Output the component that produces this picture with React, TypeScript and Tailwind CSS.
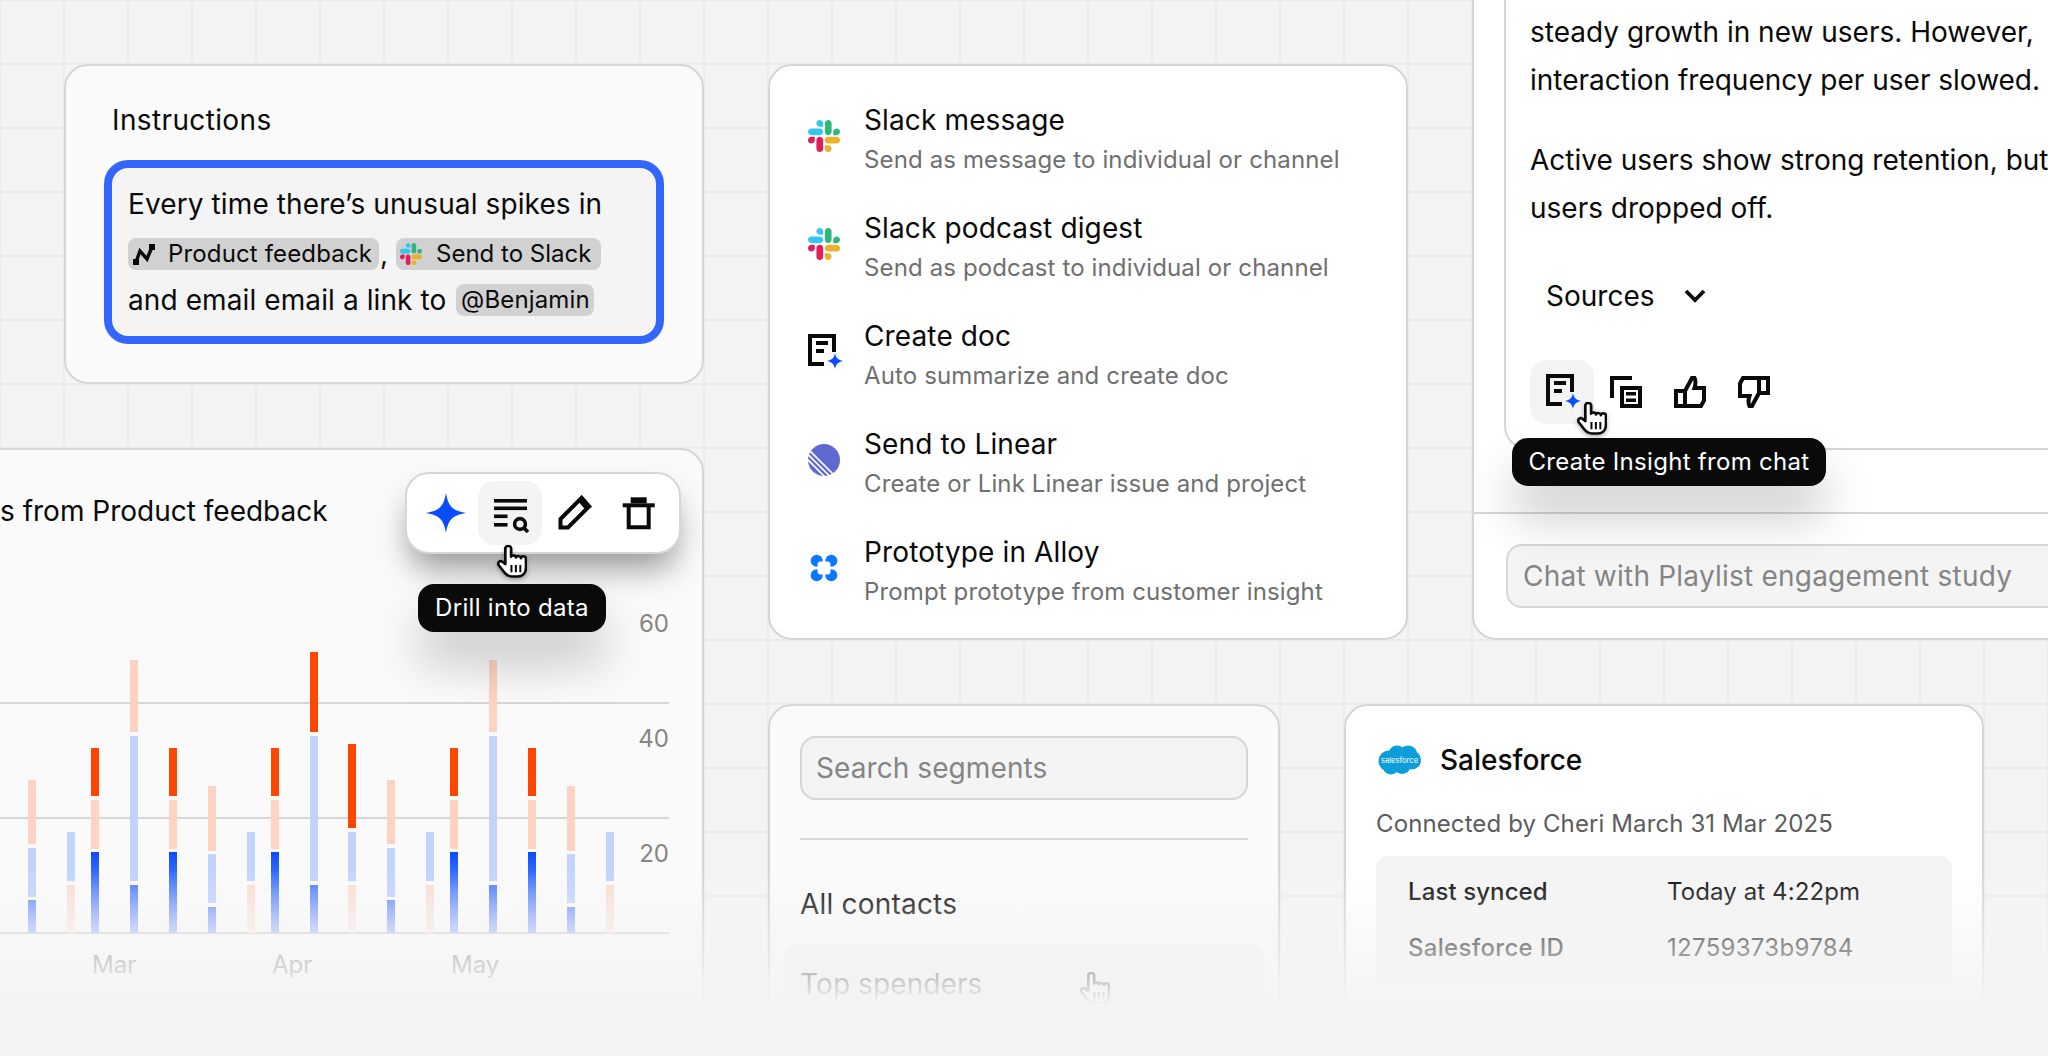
import React from "react";

const BLUE = "#0a4dff";

function Star({ size, className = "" }: { size: number; className?: string }) {
  return (
    <svg width={size} height={size} viewBox="-1 -1 2 2" className={className}>
      <path d="M0-1C.12-.32.32-.12 1 0 .32.12.12.32 0 1-.12.32-.32.12-1 0-.32-.12-.12-.32 0-1Z" fill={BLUE} />
    </svg>
  );
}

function Slack({ size }: { size: number }) {
  return (
    <svg width={size} height={size} viewBox="0 0 122.8 122.8" className="shrink-0">
      <path d="M25.8 77.6c0 7.1-5.8 12.9-12.9 12.9S0 84.7 0 77.6s5.8-12.9 12.9-12.9h12.9v12.9z" fill="#e01e5a" />
      <path d="M32.3 77.6c0-7.1 5.8-12.9 12.9-12.9s12.9 5.8 12.9 12.9v32.3c0 7.1-5.8 12.9-12.9 12.9s-12.9-5.8-12.9-12.9V77.6z" fill="#e01e5a" />
      <path d="M45.2 25.8c-7.1 0-12.9-5.8-12.9-12.9S38.1 0 45.2 0s12.9 5.8 12.9 12.9v12.9H45.2z" fill="#36c5f0" />
      <path d="M45.2 32.3c7.1 0 12.9 5.8 12.9 12.9s-5.8 12.9-12.9 12.9H12.9C5.8 58.1 0 52.3 0 45.2s5.8-12.9 12.9-12.9h32.3z" fill="#36c5f0" />
      <path d="M97 45.2c0-7.1 5.8-12.9 12.9-12.9s12.9 5.8 12.9 12.9-5.8 12.9-12.9 12.9H97V45.2z" fill="#2eb67d" />
      <path d="M90.5 45.2c0 7.1-5.8 12.9-12.9 12.9s-12.9-5.8-12.9-12.9V12.9C64.7 5.8 70.5 0 77.6 0s12.9 5.8 12.9 12.9v32.3z" fill="#2eb67d" />
      <path d="M77.6 97c7.1 0 12.9 5.8 12.9 12.9s-5.8 12.9-12.9 12.9-12.9-5.8-12.9-12.9V97h12.9z" fill="#ecb22e" />
      <path d="M77.6 90.5c-7.1 0-12.9-5.8-12.9-12.9s5.8-12.9 12.9-12.9h32.3c7.1 0 12.9 5.8 12.9 12.9s-5.8 12.9-12.9 12.9H77.6z" fill="#ecb22e" />
    </svg>
  );
}

function DocSpark() {
  return (
    <svg width="36" height="36" viewBox="0 0 36 36" className="shrink-0 overflow-visible">
      <path d="M0 0H28V18H24V4H4V28H16V32H0Z" fill="#0a0a0a" />
      <rect x="8" y="7" width="12" height="4" fill="#0a0a0a" />
      <rect x="8" y="15" width="8" height="4" fill="#0a0a0a" />
      <path d="M27 19C28 24 30 26 35 27 30 28 28 30 27 35 26 30 24 28 19 27 24 26 26 24 27 19Z" fill={BLUE} />
    </svg>
  );
}

function Linear() {
  return (
    <svg width="32" height="32" viewBox="0 0 32 32" className="shrink-0">
      <circle cx="16" cy="16" r="16" fill="#5e6ad2" />
      <g stroke="#fff" strokeWidth="1.6">
        <path d="M-2 3L30 35" />
        <path d="M-2 8.5L26 36.5" />
        <path d="M-2 14L22 38" />
      </g>
    </svg>
  );
}

function Alloy() {
  return (
    <svg width="32" height="32" viewBox="0 0 32 32" className="shrink-0">
      <g fill="#0a77ff">
        <circle cx="8.7" cy="8.7" r="6" />
        <circle cx="23.3" cy="8.7" r="6" />
        <circle cx="8.7" cy="23.3" r="6" />
        <circle cx="23.3" cy="23.3" r="6" />
      </g>
      <rect x="9.5" y="9.5" width="13" height="13" rx="3" fill="#fff" />
    </svg>
  );
}

function Hand({ className = "" }: { className?: string }) {
  return (
    <svg width="30" height="33" viewBox="0.5 0.5 27 32" preserveAspectRatio="none" className={className}>
      <path
        d="M8 4a2.6 2.6 0 0 1 5.2 0V12a2.3 2.3 0 0 1 4.4.6a2.3 2.3 0 0 1 4.4.8a2.3 2.3 0 0 1 4.6 1V22c0 5.5-3 9-7.5 9H14c-3 0-5-1.2-7-4L2 20c-1.6-2.4 1.2-5 3.4-3.2L8 19Z"
        fill="#fff"
        stroke="#0a0a0a"
        strokeWidth="2.4"
        strokeLinejoin="round"
      />
      <path d="M13.5 20v7M17.5 20v7M21.5 20v7" stroke="#0a0a0a" strokeWidth="1.8" />
    </svg>
  );
}

function Tooltip({ text, className }: { text: string; className: string }) {
  return (
    <div
      className={`absolute z-20 flex h-12 items-center whitespace-nowrap rounded-2xl bg-[#0a0a0a] text-2xl tracking-[0.3px] text-white shadow-[0_32px_48px_rgba(0,0,0,0.2)] ${className}`}
    >
      {text}
    </div>
  );
}

function ThumbUp({ flip = false }: { flip?: boolean }) {
  return (
    <svg width="32" height="32" viewBox="0 0 32 32" fill="none" className={flip ? "rotate-180" : ""}>
      <path
        d="M2 15H11V30H2ZM11 15L18 2H20.5C22 5 21.5 9 20.5 12H30V24.5L27 30H11"
        stroke="#0a0a0a"
        strokeWidth="4"
      />
    </svg>
  );
}

const COLS = [28, 67, 91, 130, 169, 208, 247, 271, 310, 348, 387, 426, 450, 489, 528, 567, 606];
const KIND = "a b c d c a2 b c e f a b c d c a2 b".split(" ");
type Seg = [number, number, string];
const LB = "#c2d3fe";
const PE = "#ffd2c1";
const OR = "#ff4600";
const SHAPES: Record<string, Seg[]> = {
  a: [[780, 844, PE], [848, 897, LB], [900, 933, "url(#cb)"]],
  a2: [[786, 851, PE], [854, 903, LB], [907, 933, "url(#cb)"]],
  b: [[832, 881, LB], [885, 933, "url(#cp)"]],
  c: [[748, 796, OR], [800, 849, PE], [852, 933, "url(#cb)"]],
  d: [[660, 732, PE], [736, 881, LB], [885, 933, "url(#cb)"]],
  e: [[652, 732, OR], [736, 881, LB], [885, 933, "url(#cb)"]],
  f: [[744, 828, OR], [832, 881, LB], [885, 933, "url(#cp)"]],
};

function Chart() {
  return (
    <svg width="680" height="480" viewBox="0 531 680 480" className="block font-['Inter',sans-serif]">
      <defs>
        <linearGradient id="cb" gradientUnits="userSpaceOnUse" x1="0" y1="852" x2="0" y2="933">
          <stop offset="0" stopColor="#0a4dff" />
          <stop offset="1" stopColor="#b0c2fb" />
        </linearGradient>
        <linearGradient id="cp" gradientUnits="userSpaceOnUse" x1="0" y1="885" x2="0" y2="933">
          <stop offset="0" stopColor="#fddccf" />
          <stop offset="1" stopColor="#f8ece8" />
        </linearGradient>
      </defs>
      {[702, 817, 932].map((y) => (
        <rect key={y} x="0" y={y} width="669" height="2" fill="#d6d6d6" />
      ))}
      {COLS.map((x, i) =>
        SHAPES[KIND[i]].map(([a, b, c]) => <rect key={`${i}-${a}`} x={x} y={a} width="8" height={b - a} fill={c} />)
      )}
      <g fill="#858585" fontSize="24" textAnchor="end">
        <text x="669" y="632">60</text>
        <text x="669" y="747">40</text>
        <text x="669" y="862">20</text>
      </g>
      <g fill="#858585" fontSize="24">
        <text x="92" y="973">Mar</text>
        <text x="272" y="973">Apr</text>
        <text x="451" y="973">May</text>
      </g>
    </svg>
  );
}

function Item({ icon, title, sub }: { icon: React.ReactNode; title: string; sub: string }) {
  return (
    <div className="flex items-center gap-6">
      <div className="-mt-1 w-8 shrink-0">{icon}</div>
      <div>
        <div className="h-[43px] text-[28px] leading-10 tracking-[0.13px] text-[#0a0a0a]">{title}</div>
        <div className="text-2xl leading-[33px] tracking-[0.13px] text-[#6f6f6f]">{sub}</div>
      </div>
    </div>
  );
}

export default function App() {
  return (
    <div className="relative flex h-[1056px] w-[2048px] overflow-hidden bg-[#f4f4f4] bg-[linear-gradient(to_right,#ececec_2px,transparent_2px),linear-gradient(to_bottom,#ececec_2px,transparent_2px)] bg-size-[64px_64px] bg-position-[-1px_-1px] font-['Inter',sans-serif] text-[#0a0a0a]">
      {/* left column */}
      <div className="flex w-[704px] shrink-0 flex-col gap-16 pl-16 pt-16">
        <div className="h-[320px] w-[640px] shrink-0 rounded-3xl border-2 border-[#d6d6d6] bg-[#fafafa] px-[38px] pt-[34px]">
          <div className="pl-[8px] text-[28px] leading-10 tracking-[0.37px]">Instructions</div>
          <div className="mt-5 h-[184px] w-[560px] rounded-3xl border-8 border-[#3366ff] bg-[#f4f4f4] pl-4 pt-3 text-[28px]">
            <div className="h-12 leading-[48px] tracking-[0.11px]">Every time there’s unusual spikes in</div>
            <div className="flex h-[52px] items-center whitespace-nowrap">
              <span className="flex h-8 w-[251px] items-center gap-[12px] rounded-lg bg-[#d1d1d1] pl-1 text-2xl tracking-[0.15px]">
                <svg width="24" height="24" viewBox="0 0 24 24" fill="none">
                  <path d="M4 20L8 9L15 17L20 5" stroke="#0a0a0a" strokeWidth="3.4" />
                  <rect x="1" y="17" width="6" height="6" fill="#0a0a0a" />
                  <rect x="17" y="2" width="6" height="6" fill="#0a0a0a" />
                </svg>
                Product feedback
              </span>
              <span className="w-[17px] pl-[1px]">,</span>
              <span className="flex h-8 w-[205px] items-center gap-[14px] rounded-lg bg-[#d1d1d1] pl-1 text-2xl">
                <Slack size={22} />
                Send to Slack
              </span>
            </div>
            <div className="-mt-1 flex h-12 items-center whitespace-nowrap">
              <span className="tracking-[0.1px]">and email email a link to</span>
              <span className="ml-[10px] flex h-8 w-[138px] items-center justify-center rounded-lg bg-[#d1d1d1] text-2xl tracking-[0.15px]">@Benjamin</span>
            </div>
          </div>
        </div>

        <div className="relative -ml-[88px] h-[640px] w-[728px] shrink-0 rounded-3xl border-2 border-[#d6d6d6] bg-[#fafafa] pl-[22px] pt-[41px]">
          <div className="h-10 whitespace-nowrap text-[28px] leading-10">s from Product feedback</div>
          <Chart />
          <div className="absolute left-[427px] top-[22px] z-10 flex h-[82px] w-[276px] items-center rounded-3xl border-2 border-[#d6d6d6] bg-white pl-[7px] shadow-[0_20px_32px_-6px_rgba(0,0,0,0.4)]">
            <div className="flex h-16 w-16 items-center justify-center">
              <Star size={40} />
            </div>
            <div className="flex h-16 w-16 items-center justify-center rounded-2xl bg-[#f4f4f4]">
              <svg width="40" height="40" viewBox="0 0 40 40" fill="#0a0a0a">
                <rect x="4" y="6" width="33" height="3.6" />
                <rect x="4" y="13.5" width="33" height="3.6" />
                <rect x="4" y="21.5" width="13.5" height="3.6" />
                <rect x="4" y="30" width="13.5" height="3.6" />
                <circle cx="30" cy="31" r="5.4" fill="none" stroke="#0a0a0a" strokeWidth="3.6" />
                <path d="M33.5 34.5L38 39" stroke="#0a0a0a" strokeWidth="3.6" />
              </svg>
            </div>
            <div className="flex h-16 w-16 items-center justify-center">
              <svg width="40" height="40" viewBox="0 0 40 40" fill="none">
                <path d="M6.5 26L27.5 5L35 13.5L14 34.5H6.5Z" stroke="#0a0a0a" strokeWidth="4" />
                <path d="M24 8L27.7 2L38 13.7L31.5 17Z" fill="#0a0a0a" />
              </svg>
            </div>
            <div className="flex h-16 w-16 items-center justify-center">
              <svg width="40" height="40" viewBox="0 0 40 40" fill="#0a0a0a">
                <rect x="12.7" y="4.3" width="16" height="6" />
                <rect x="4.7" y="10.3" width="32" height="4" />
                <path d="M8.7 14H12.7V32.3H28.7V14H32.7V36.3H8.7Z" />
              </svg>
            </div>
          </div>
          <Tooltip text="Drill into data" className="left-[440px] top-[134px] w-[188px] justify-center" />
          <Hand className="absolute left-[519px] top-[95px] z-30 drop-shadow-[0_2px_2px_rgba(0,0,0,0.3)]" />
        </div>
      </div>

      {/* right area */}
      <div className="ml-16 flex flex-col gap-16">
        <div className="flex h-[640px] shrink-0 gap-16 pt-16">
          <div className="flex h-[576px] w-[640px] shrink-0 flex-col gap-8 rounded-3xl border-2 border-[#d6d6d6] bg-white pl-[38px] pt-[34px]">
            <Item icon={<Slack size={32} />} title="Slack message" sub="Send as message to individual or channel" />
            <Item icon={<Slack size={32} />} title="Slack podcast digest" sub="Send as podcast to individual or channel" />
            <Item icon={<DocSpark />} title="Create doc" sub="Auto summarize and create doc" />
            <Item icon={<Linear />} title="Send to Linear" sub="Create or Link Linear issue and project" />
            <Item icon={<Alloy />} title="Prototype in Alloy" sub="Prompt prototype from customer insight" />
          </div>

          <div className="relative -mt-[164px] flex h-[740px] w-[700px] shrink-0 flex-col rounded-3xl border-2 border-[#d6d6d6] bg-white">
            <div className="ml-[30px] flex flex-1 flex-col justify-end rounded-bl-3xl border-b-2 border-l-2 border-[#d6d6d6] pb-[24px] pl-[24px] text-[28px] leading-[48px]">
              <div className="whitespace-nowrap">steady growth in new users. However,</div>
              <div className="whitespace-nowrap">interaction frequency per user slowed.</div>
              <div className="mt-8 whitespace-nowrap">Active users show strong retention, but</div>
              <div className="whitespace-nowrap">users dropped off.</div>
              <div className="mb-8 mt-8 flex h-16 items-center gap-[28px] pl-4">
                <span>Sources</span>
                <svg width="24" height="24" viewBox="0 0 24 24" fill="none">
                  <path d="M3 7L12 16L21 7" stroke="#0a0a0a" strokeWidth="3.8" />
                </svg>
              </div>
              <div className="flex">
                <div className="flex h-16 w-16 items-center rounded-2xl bg-[#f4f4f4] pl-4">
                  <DocSpark />
                </div>
                <div className="flex h-16 w-16 items-center justify-center">
                  <svg width="32" height="32" viewBox="0 0 32 32" fill="#0a0a0a">
                    <path d="M0 0H22V4H4V22H0Z" />
                    <path fillRule="evenodd" d="M10 10H32V32H10ZM14 14V28H28V14Z" />
                    <rect x="16" y="16" width="10" height="3.5" />
                    <rect x="16" y="22.5" width="10" height="3.5" />
                  </svg>
                </div>
                <div className="flex h-16 w-16 items-center justify-center">
                  <ThumbUp />
                </div>
                <div className="flex h-16 w-16 items-center justify-center">
                  <ThumbUp flip />
                </div>
              </div>
            </div>
            <div className="h-[64px] shrink-0 border-b-2 border-[#d6d6d6]" />
            <div className="h-[124px] shrink-0 pl-[32px] pt-[30px]">
              <div className="flex h-16 items-center rounded-2xl border-2 border-[#d6d6d6] bg-[#f4f4f4] pl-[15px] text-[28px] tracking-[0.22px] text-[#858585]">
                Chat with Playlist engagement study
              </div>
            </div>
            <Tooltip text="Create Insight from chat" className="left-[38px] top-[536px] w-[314px] justify-center" />
            <Hand className="absolute left-[103px] top-[500px] z-30 drop-shadow-[0_2px_2px_rgba(0,0,0,0.3)]" />
          </div>
        </div>

        <div className="flex gap-16">
          <div className="relative h-[400px] w-[512px] shrink-0 rounded-3xl border-2 border-[#d6d6d6] bg-[#fafafa] px-[30px] pt-[30px]">
            <div className="flex h-16 items-center rounded-2xl border-2 border-[#d6d6d6] bg-[#f4f4f4] pl-[14px] text-[28px] tracking-[0.08px] text-[#858585]">
              Search segments
            </div>
            <div className="mt-[38px] h-0.5 bg-[#d6d6d6]" />
            <div className="mt-[44px] h-10 text-[28px] leading-10 tracking-[0.2px]">All contacts</div>
            <div className="-mx-4 mt-5 flex h-20 items-center rounded-2xl bg-[#f1f1f1] px-4 text-[28px] tracking-[0.1px]">Top spenders</div>
            <Hand className="absolute left-[310px] top-[266px]" />
          </div>

          <div className="h-[400px] w-[640px] shrink-0 rounded-3xl border-2 border-[#d6d6d6] bg-white px-[30px] pt-[34px]">
            <div className="flex h-10 items-center gap-[19px] pl-[2px]">
              <svg width="43" height="30" viewBox="0 0 43 30">
                <g fill="#0d9dda">
                  <circle cx="11" cy="16" r="10.5" />
                  <circle cx="19" cy="9" r="8.5" />
                  <circle cx="30" cy="10" r="9.5" />
                  <circle cx="33.5" cy="15" r="9.5" />
                  <circle cx="24" cy="20" r="9" />
                  <circle cx="13" cy="21" r="8.5" />
                </g>
                <text x="21.5" y="17.5" textAnchor="middle" fontSize="7.6" fill="#fff" fontFamily="Inter, sans-serif">salesforce</text>
              </svg>
              <span className="text-[28px] font-medium">Salesforce</span>
            </div>
            <div className="mt-[26px] h-9 text-2xl leading-9 tracking-[0.11px] text-[#5c5c5c]">Connected by Cheri March 31 Mar 2025</div>
            <div className="mt-[14px] h-[130px] w-[576px] rounded-xl bg-[#f4f4f4] px-8 pt-[8px] text-2xl">
              <div className="flex h-14 items-center">
                <span className="w-[259px] font-medium tracking-[0.1px]">Last synced</span>
                <span className="tracking-[0.1px]">Today at 4:22pm</span>
              </div>
              <div className="flex h-14 items-center">
                <span className="w-[259px] font-medium tracking-[0.3px]">Salesforce ID</span>
                <span className="tracking-[0.3px]">12759373b9784</span>
              </div>
            </div>
          </div>
        </div>
      </div>

      <div className="pointer-events-none absolute inset-x-0 bottom-0 top-[870px] z-40 bg-[linear-gradient(to_bottom,#f4f4f400,#f4f4f4_135px)]" />
    </div>
  );
}
